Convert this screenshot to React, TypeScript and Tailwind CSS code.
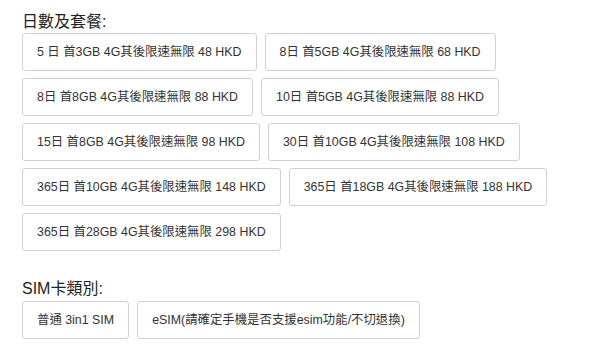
const plans = [
  "5 日 首3GB 4G其後限速無限 48 HKD",
  "8日 首5GB 4G其後限速無限 68 HKD",
  "8日 首8GB 4G其後限速無限 88 HKD",
  "10日 首5GB 4G其後限速無限 88 HKD",
  "15日 首8GB 4G其後限速無限 98 HKD",
  "30日 首10GB 4G其後限速無限 108 HKD",
  "365日 首10GB 4G其後限速無限 148 HKD",
  "365日 首18GB 4G其後限速無限 188 HKD",
  "365日 首28GB 4G其後限速無限 298 HKD",
];

const simTypes = ["普通 3in1 SIM", "eSIM(請確定手機是否支援esim功能/不切退換)"];

function OptionButton({ label }: { label: string }) {
  return (
    <button className="h-[38px] flex items-center justify-center px-[14px] border border-[#d0d0d0] rounded-[3px] bg-white text-[12.4px] leading-[18px] text-[#333] whitespace-nowrap">
      {label}
    </button>
  );
}

export default function App() {
  return (
    <div className="min-h-screen bg-white px-[22px] pt-[10px] font-['Liberation_Sans','Noto_Sans_CJK_TC',sans-serif] text-[#333]">
      <h3 className="text-[16px] leading-[23px] text-[#222]">日數及套餐:</h3>
      <div className="flex flex-wrap gap-x-2 gap-y-[7px]">
        {plans.map((p) => (
          <OptionButton key={p} label={p} />
        ))}
      </div>

      <h3 className="text-[16px] leading-[23px] text-[#222] mt-[26px] mb-[1px]">SIM卡類別:</h3>
      <div className="flex flex-wrap gap-x-2 gap-y-[7px]">
        {simTypes.map((s) => (
          <OptionButton key={s} label={s} />
        ))}
      </div>
    </div>
  );
}
